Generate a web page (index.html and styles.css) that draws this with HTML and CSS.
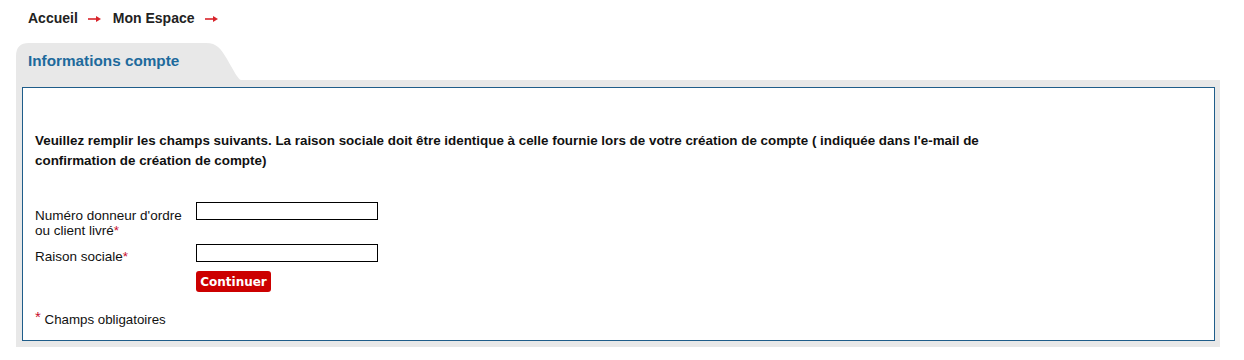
FILE: index.html
```html
<!DOCTYPE html>
<html lang="fr">
<head>
<meta charset="utf-8">
<title>Informations compte</title>
<link rel="stylesheet" href="styles.css">
</head>
<body>
<nav class="breadcrumb">
  <a class="crumb">Accueil</a>
  <svg class="sep" width="13" height="8" viewBox="0 0 13 8" aria-hidden="true"><path d="M0,4 H9" stroke="#d8232a" stroke-width="1.6" fill="none"/><path d="M8,1 L13,4 L8,7 Z" fill="#d8232a"/></svg>
  <a class="crumb">Mon Espace</a>
  <svg class="sep" width="13" height="8" viewBox="0 0 13 8" aria-hidden="true"><path d="M0,4 H9" stroke="#d8232a" stroke-width="1.6" fill="none"/><path d="M8,1 L13,4 L8,7 Z" fill="#d8232a"/></svg>
</nav>
<div class="panel">
  <div class="tab"><h1 class="tab-title">Informations compte</h1></div>
  <div class="frame">
    <div class="box">
      <p class="intro">Veuillez remplir les champs suivants. La raison sociale doit être identique à celle fournie lors de votre création de compte ( indiquée dans l'e-mail de confirmation de création de compte)</p>
      <form class="form">
        <div class="row row-first">
          <label class="label label-first">Numéro donneur d'ordre ou client livré<span class="req">*</span></label>
          <input class="field" type="text">
        </div>
        <div class="row">
          <label class="label">Raison sociale<span class="req">*</span></label>
          <input class="field" type="text">
        </div>
        <div class="row row-btn">
          <span class="label"></span>
          <button class="btn" type="button">Continuer</button>
        </div>
      </form>
      <p class="note"><span class="req req-big">*</span> Champs obligatoires</p>
    </div>
  </div>
</div>
</body>
</html>
```
FILE: styles.css
```css
html, body {
  margin: 0;
  padding: 0;
  background: #ffffff;
  font-family: "Liberation Sans", Arial, sans-serif;
  color: #111111;
}
.breadcrumb {
  display: flex;
  align-items: flex-start;
  padding: 10px 0 0 28px;
  height: 33px;
  box-sizing: border-box;
  font-size: 14px;
  font-weight: bold;
  line-height: 16px;
  color: #222222;
}
.crumb { color: #222222; }
.sep {
  margin: 5px 12px 0 10px;
}
.panel {
  margin: 10px 24px 0 16px;
}
.tab {
  width: 226px;
  height: 37px;
  background: #e8e8e8;
  clip-path: path("M0,37 L0,13 Q0,0 13,0 L190,0 C201,0 205,6 211,16 C219,30 222,36 225,37 Z");
  box-sizing: border-box;
  padding: 9px 0 0 12px;
}
.tab-title {
  margin: 0;
  font-size: 15.3px;
  font-weight: bold;
  line-height: 18px;
  color: #1d6a9c;
}
.frame {
  background: #e8e8e8;
  padding: 7px 5px 6px 6px;
}
.box {
  background: #ffffff;
  border: 1px solid #1f5d8a;
  padding: 43px 12px 13px 12px;
}
.intro {
  margin: 0 0 31px 0;
  max-width: 985px;
  font-size: 13.4px;
  font-weight: bold;
  line-height: 20px;
}
.form {
  display: flex;
  flex-direction: column;
}
.row {
  display: flex;
  align-items: flex-start;
}
.row-first { height: 42px; }
.row-btn { margin-top: 7px; }
.label {
  width: 161px;
  padding: 5px 8px 0 0;
  box-sizing: border-box;
  font-size: 13.5px;
  line-height: 15px;
  color: #111111;
}
.label-first {
  padding-top: 6px;
}
.req { color: #c8102e; }
.req-big {
  font-size: 15px;
  vertical-align: 2px;
}
.field {
  width: 182px;
  height: 18px;
  box-sizing: border-box;
  border: 1px solid #000000;
  margin: 0;
  padding: 0 2px;
  font-size: 12px;
}
.btn {
  margin: 0;
  height: 21px;
  width: 75px;
  border: none;
  border-radius: 3px;
  background: #cc0000;
  color: #ffffff;
  font-family: "DejaVu Sans", Verdana, sans-serif;
  font-weight: bold;
  font-size: 12px;
  padding: 0;
}
.note {
  margin: 17px 0 0 0;
  font-size: 13.3px;
  line-height: 15px;
}
```
